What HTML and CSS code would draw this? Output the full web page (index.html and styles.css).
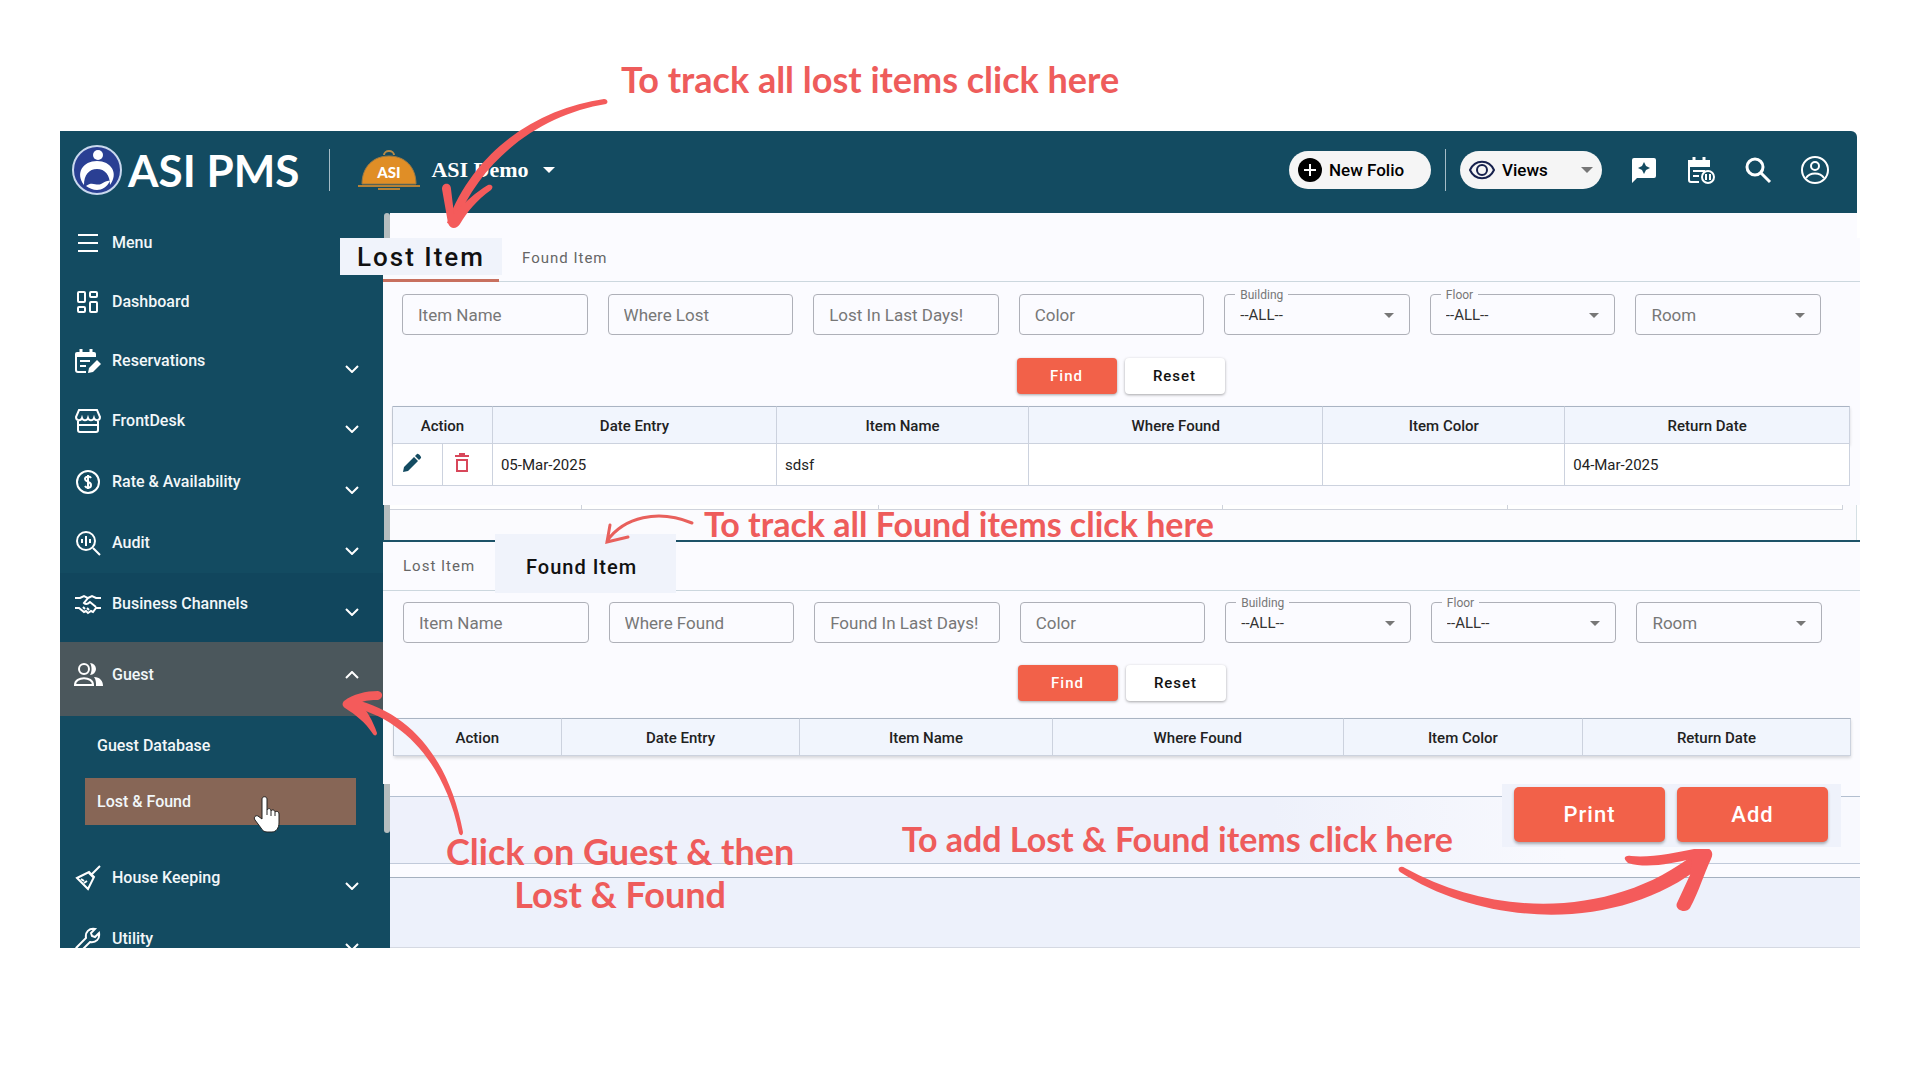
FILE: index.html
```html
<!DOCTYPE html>
<html lang="en">
  <head>
    <meta charset="utf-8">
    <title>ASI PMS - Lost &amp; Found</title>
    <link rel="stylesheet" href="styles.css">
  </head>
  <body>
    <div class="app">
      <header class="topbar">
        <a class="brand" href="#">
          <svg width="52" height="52" viewBox="0 0 52 52">
            <circle cx="26" cy="26" r="24" fill="#2a3f93" stroke="#c9d8ee" stroke-width="2"/>
            <circle cx="27" cy="11" r="5" fill="#fff"/>
            <path d="M13 41C4 29 12 17 26 17s22 12 13 24c0-10-5-16-13-16S13 31 13 41z" fill="#fff"/>
            <path d="M15 42c6-5 10 0 15-2 3-1 5-4 9-3-3 6-8 9-13 9-4 0-8-2-11-4z" fill="#fff"/>
          </svg>
          <span>ASI PMS</span>
        </a>
        <span class="divider"></span>
        <button class="property">
          <svg width="62" height="40" viewBox="0 0 62 40">
            <path d="M26 5a5 4 0 0 1 10 0" fill="none" stroke="#b98a45" stroke-width="2"/>
            <path d="M4 34C4 17 15 6 31 6s27 11 27 28z" fill="#e08e26" stroke="#9b7a46"/>
            <path d="M0 35h62v2H0z M20 38h22v2H20z" fill="#b58136"/>
            <text x="31" y="28" text-anchor="middle" class="cloche-text">ASI</text>
          </svg>
          <span>ASI Demo</span>
          <i class="caret"></i>
        </button>
        <div class="actions">
          <button class="pill">
            <svg width="24" height="24" viewBox="0 0 24 24"><circle cx="12" cy="12" r="12"/><path d="M12 6v12M6 12h12" stroke="#fff" stroke-width="2"/></svg>
            New Folio
          </button>
          <span class="divider"></span>
          <button class="pill views">
            <svg width="26" height="26" viewBox="0 0 26 26" fill="none" stroke="#17214d" stroke-width="2"><path d="M1 13C6 2 20 2 25 13 20 24 6 24 1 13z"/><circle cx="13" cy="13" r="5"/></svg>
            Views
            <i class="caret"></i>
          </button>
          <button class="icon" aria-label="What's new">
            <svg width="28" height="28" viewBox="0 0 28 28"><path d="M4 2h20a2 2 0 0 1 2 2v16a2 2 0 0 1-2 2H7l-5 5V4a2 2 0 0 1 2-2z" fill="#fff"/><path d="M14 6l2 4 4 2-4 2-2 4-2-4-4-2 4-2z" fill="#134b61"/></svg>
          </button>
          <button class="icon" aria-label="Calendar">
            <svg width="28" height="28" viewBox="0 0 28 28" fill="none" stroke="#fff" stroke-width="2"><path d="M7 1v5M17 1v5" stroke-width="3"/><path d="M1 4h22v7H1z" fill="#fff" stroke="none"/><path d="M2 9v15a2 2 0 0 0 2 2h8M6 15h12M6 20h6"/><circle cx="21" cy="21" r="6"/><path d="M19 18v6M23 18v6"/></svg>
          </button>
          <button class="icon" aria-label="Search">
            <svg width="28" height="28" viewBox="0 0 28 28" fill="none" stroke="#fff" stroke-width="3"><circle cx="11" cy="11" r="8"/><path d="M17 17l9 9"/></svg>
          </button>
          <button class="icon" aria-label="Account">
            <svg width="28" height="28" viewBox="0 0 28 28" fill="none" stroke="#fff" stroke-width="2"><circle cx="14" cy="14" r="13"/><circle cx="14" cy="10" r="4"/><path d="M5 22c4-6 14-6 18 0"/></svg>
          </button>
        </div>
      </header>

      <div class="layout">
        <nav class="sidebar">
          <ul>
            <li class="short"><a href="#"><svg class="ic" viewBox="0 0 26 26"><path d="M3 5h20M3 13h20M3 21h20"/></svg>Menu</a></li>
            <li class="short"><a href="#"><svg class="ic" viewBox="0 0 26 26"><rect x="3" y="3" width="7" height="10" rx="1"/><rect x="15" y="3" width="7" height="5" rx="1"/><rect x="3" y="18" width="7" height="5" rx="1"/><rect x="15" y="13" width="7" height="10" rx="1"/></svg>Dashboard</a></li>
            <li class="short"><a href="#"><svg class="ic" viewBox="0 0 26 26"><path d="M6 1v4M16 1v4" stroke-width="3"/><path d="M0 6a2 2 0 0 1 2-2h17a2 2 0 0 1 2 2v3H0z" class="solid"/><path d="M1 8v14a2 2 0 0 0 2 2h8M5 13h10M5 18h6"/><path d="M13 25l1-5 8-8 4 4-8 8z" class="solid"/></svg>Reservations<svg class="chev" viewBox="0 0 14 8"><path d="M1 1l6 6 6-6"/></svg></a></li>
            <li><a href="#"><svg class="ic" viewBox="0 0 26 26"><path d="M4 2h18l3 7c0 4-5 4-6 1-1 3-5 3-6 0-1 3-5 3-6 0-1 3-6 3-6-1zM3 13v9a2 2 0 0 0 2 2h16a2 2 0 0 0 2-2v-9M3 17h20"/></svg>FrontDesk<svg class="chev" viewBox="0 0 14 8"><path d="M1 1l6 6 6-6"/></svg></a></li>
            <li><a href="#"><svg class="ic" viewBox="0 0 26 26"><circle cx="13" cy="13" r="11"/><path d="M16 9c-1-2-6-2-6 1s6 2 6 6-5 3-6 1M13 6v14"/></svg>Rate &amp; Availability<svg class="chev" viewBox="0 0 14 8"><path d="M1 1l6 6 6-6"/></svg></a></li>
            <li><a href="#"><svg class="ic" viewBox="0 0 26 26"><circle cx="11" cy="11" r="9"/><path d="M18 18l7 7M7 9v4M11 6v10M15 9v4"/></svg>Audit<svg class="chev" viewBox="0 0 14 8"><path d="M1 1l6 6 6-6"/></svg></a></li>
            <li class="channels"><a href="#"><svg class="ic" viewBox="0 0 26 26"><path d="M0 7h5l4-2 4 2-4 5c2 2 4 1 6-1l6 5M26 7h-5l-4-2-4 2M0 17h4l5 4 2-1 2 2 3-2 2 1 3-4h5M8 16l2 2M12 17l2 2"/></svg>Business Channels<svg class="chev" viewBox="0 0 14 8"><path d="M1 1l6 6 6-6"/></svg></a></li>
            <li class="guest"><a href="#"><svg class="ic wide" viewBox="0 0 30 26"><circle cx="11" cy="7" r="5"/><path d="M2 23c0-9 18-9 18 0z"/><path d="M17 1a6 6 0 1 1 0 12c2-3 2-9 0-12zM21 15c6 0 9 4 9 9h-7c0-4 0-6-2-9z" class="solid"/></svg>Guest<svg class="chev" viewBox="0 0 14 8"><path d="M1 7l6-6 6 6"/></svg></a></li>
            <li class="sub"><a href="#">Guest Database</a></li>
            <li class="sub active"><a href="#">Lost &amp; Found</a></li>
            <li><a href="#"><svg class="ic" viewBox="0 0 26 26"><path d="M25 1l-8 8M2 13l12-6 5 5-6 12zM6 14l3 2M9 18l3-2M14 8l5 5" /></svg>House Keeping<svg class="chev" viewBox="0 0 14 8"><path d="M1 1l6 6 6-6"/></svg></a></li>
            <li class="last"><a href="#"><svg class="ic" viewBox="0 0 26 26"><path d="M2 25c-2-2-1-3 0-4l9-9c-1-6 3-10 9-9l-4 4 1 3 3 1 4-4c1 6-3 10-9 9l-9 9c-1 1-2 1-4 0z"/></svg>Utility<svg class="chev" viewBox="0 0 14 8"><path d="M1 1l6 6 6-6"/></svg></a></li>
          </ul>
        </nav>

        <main>
          <div class="spacer"></div>
          <section class="panel lost">
            <div class="tabs">
              <button class="tab current">Lost Item</button>
              <button class="tab">Found Item</button>
            </div>
            <form>
              <div class="fields">
                <input type="text" placeholder="Item Name" aria-label="Item Name">
                <input type="text" placeholder="Where Lost" aria-label="Where Lost">
                <input type="text" placeholder="Lost In Last Days!" aria-label="Lost In Last Days!">
                <input type="text" placeholder="Color" aria-label="Color">
                <div class="select"><label for="building1">Building</label><select id="building1"><option>--ALL--</option></select></div>
                <div class="select"><label for="floor1">Floor</label><select id="floor1"><option>--ALL--</option></select></div>
                <div class="select empty"><select aria-label="Room"><option>Room</option></select></div>
              </div>
              <div class="buttons">
                <button type="button" class="btn primary">Find</button>
                <button type="button" class="btn">Reset</button>
              </div>
            </form>
            <table>
              <colgroup><col class="w3"><col class="w3"><col class="w19"><col class="w17"><col class="w20"><col class="w16"><col></colgroup>
              <thead>
                <tr><th colspan="2">Action</th><th>Date Entry</th><th>Item Name</th><th>Where Found</th><th>Item Color</th><th>Return Date</th></tr>
              </thead>
              <tbody>
                <tr>
                  <td class="act"><button aria-label="Edit"><svg width="20" height="20" viewBox="0 0 20 20" fill="#134b61"><path d="M1 19l1-5L12 4l4 4L6 18zM13 3l2-2c1-1 5 3 4 4l-2 2z"/></svg></button></td>
                  <td class="act"><button aria-label="Delete"><svg width="20" height="20" viewBox="0 0 20 20" fill="none" stroke="#d8475a" stroke-width="2"><path d="M3 3h14M7 1h6M5 7h10v11H5z"/></svg></button></td>
                  <td>05-Mar-2025</td><td>sdsf</td><td></td><td></td><td>04-Mar-2025</td>
                </tr>
              </tbody>
            </table>
          </section>

          <div class="strip">
            <div class="ticks"><i></i><i></i><i></i><i></i><i></i></div>
          </div>

          <section class="panel found">
            <div class="tabs">
              <button class="tab">Lost Item</button>
              <button class="tab current">Found Item</button>
            </div>
            <form>
              <div class="fields">
                <input type="text" placeholder="Item Name" aria-label="Item Name">
                <input type="text" placeholder="Where Found" aria-label="Where Found">
                <input type="text" placeholder="Found In Last Days!" aria-label="Found In Last Days!">
                <input type="text" placeholder="Color" aria-label="Color">
                <div class="select"><label for="building2">Building</label><select id="building2"><option>--ALL--</option></select></div>
                <div class="select"><label for="floor2">Floor</label><select id="floor2"><option>--ALL--</option></select></div>
                <div class="select empty"><select aria-label="Room"><option>Room</option></select></div>
              </div>
              <div class="buttons">
                <button type="button" class="btn primary">Find</button>
                <button type="button" class="btn">Reset</button>
              </div>
            </form>
            <table>
              <colgroup><col class="w11"><col class="w16"><col class="w17"><col class="w20"><col class="w16"><col></colgroup>
              <thead>
                <tr><th>Action</th><th>Date Entry</th><th>Item Name</th><th>Where Found</th><th>Item Color</th><th>Return Date</th></tr>
              </thead>
            </table>
          </section>

          <footer>
            <div class="band">
              <div class="big-buttons">
                <button class="big">Print</button>
                <button class="big">Add</button>
              </div>
            </div>
            <div class="band low"></div>
          </footer>
        </main>
      </div>
    </div>

    <!-- hand pointer over Lost & Found -->
    <svg class="hand" width="28" height="38" viewBox="0 0 28 38"><path d="M9 3c0-3 5-3 5 0v11c1-2 4-2 4 1 1-2 4-1 4 1 1-1 4-1 4 2v9c0 5-3 9-7 9h-5c-3 0-5-2-6-4L2 24c-2-3 1-5 3-4l4 3z" fill="#fff" stroke="#222" stroke-width="1"/><path d="M14 14v5M18 15v5M22 16v4" stroke="#222"/></svg>

    <!-- help notes -->
    <p class="note large n1">To track all lost items click here</p>
    <p class="note n2">To track all Found items click here</p>
    <p class="note large n3">Click on Guest &amp; then<br>Lost &amp; Found</p>
    <p class="note n4">To add Lost &amp; Found items click here</p>

    <svg class="arrow a1" width="180" height="140" viewBox="0 0 180 140">
      <path d="M174 6C110 15 45 55 17 130l8 2C53 62 114 21 176 11c3-2 1-5-2-5z"/>
      <path d="M12 96c0-7 9-7 9 0l3 25c10-11 22-22 34-29 4-1 6 2 3 5-14 10-24 22-31 34-4 6-10 5-12-1z"/>
    </svg>
    <svg class="arrow a2" width="100" height="40" viewBox="0 0 100 40">
      <path d="M92 14C58 0 24 8 7 32M10 16L7 33l21-5" class="line"/>
    </svg>
    <svg class="arrow a3" width="130" height="150" viewBox="0 0 130 150">
      <path d="M8 16C65 28 105 75 119 143c1 3 4 3 4-1C110 72 72 22 12 9z"/>
      <path d="M4 11c9-7 22-10 34-10 6 1 5 8 0 9-6 0-13 0-18 3 7 8 13 18 17 30 0 3-3 3-4 1C25 32 16 25 5 18c-3-2-3-5-1-7z"/>
    </svg>
    <svg class="arrow a4" width="320" height="70" viewBox="0 0 320 70">
      <path d="M2 23c-4-4 1-7 5-4 90 50 210 50 292-16l6 13C222 83 90 79 2 23z"/>
      <path d="M230 14c-6-5-3-8 3-7 22 2 48-4 68-8 10-2 16 3 12 11-8 17-11 30-21 49-4 6-16 2-13-5l13-28 2-16c-20 4-44 10-64 4z"/>
    </svg>
  </body>
</html>
```
FILE: styles.css
```css
* {
  box-sizing: border-box;
}

body {
  margin: 0;
  padding: 131px 60px;
  position: relative;
  background: #fff;
  font-family: Roboto, sans-serif;
  font-size: 15px;
  color: #222;
}

button,
input,
select {
  font-family: inherit;
}

button {
  border: none;
  padding: 0;
  background: none;
  cursor: pointer;
}

svg {
  display: block;
}

/* top bar */
.topbar {
  display: flex;
  align-items: center;
  height: 82px;
  margin-right: 3px;
  padding: 0 28px 4px 11px;
  background: #134b61;
  border-radius: 0 6px 0 0;
}

.brand {
  display: flex;
  align-items: center;
  gap: 5px;
  color: #fff;
  font: 700 44px Lato, sans-serif;
  text-decoration: none;
}

.divider {
  width: 1px;
  height: 42px;
  background: #a5bcc6;
}

.brand + .divider {
  margin: 0 28px 0 30px;
}

.property {
  display: flex;
  align-items: center;
  color: #fff;
  font: 700 22px "Liberation Serif", serif;
}

.property span {
  margin: 0 14px 0 11px;
}

.cloche-text {
  font: 900 15px Lato, sans-serif;
  fill: #fff;
}

.caret {
  border: 6px solid transparent;
  border-top-color: currentColor;
  border-bottom: 0;
}

.actions {
  display: flex;
  align-items: center;
  margin-left: auto;
}

.actions .divider {
  margin: 0 14px;
}

.pill {
  display: flex;
  align-items: center;
  gap: 7px;
  width: 142px;
  height: 38px;
  padding: 0 9px;
  border-radius: 19px;
  background: #f5f5f5;
  color: #000;
  font-size: 17px;
  font-weight: 500;
}

.pill .caret {
  margin-left: auto;
  color: #777;
}

.icon {
  margin-left: 29px;
}

.views + .icon {
  margin-left: 28px;
}

/* sidebar */
.layout {
  display: flex;
}

.sidebar {
  width: 330px;
  flex: none;
  position: relative;
  background: #134b61;
}

/* scroll thumb */
.sidebar::after {
  content: "";
  position: absolute;
  top: 0;
  right: 0;
  width: 6px;
  height: 620px;
  border-radius: 3px;
  background: #b6bdbf;
}

.sidebar ul {
  margin: 0;
  padding: 0;
  list-style: none;
}

.sidebar a {
  display: flex;
  align-items: center;
  height: 61px;
  padding: 0 31px 0 15px;
  color: #f2f7f9;
  font-size: 16px;
  font-weight: 500;
  text-decoration: none;
}

.sidebar .short a {
  height: 59px;
}

.ic {
  width: 26px;
  height: 26px;
  margin-right: 11px;
  fill: none;
  stroke: #fff;
  stroke-width: 2;
}

.ic.wide {
  width: 30px;
  margin: 0 9px 0 -2px;
}

.ic .solid {
  fill: #fff;
  stroke: none;
}

.chev {
  width: 14px;
  height: 8px;
  margin: 16px 0 0 auto;
  fill: none;
  stroke: #fff;
  stroke-width: 2;
}

.sidebar .channels {
  padding-bottom: 8px;
  background: #11465d;
}

.guest {
  height: 74px;
  padding-top: 2px;
  background: #4b575c;
}

.guest .chev {
  margin-top: 0;
}

.sidebar .sub a {
  height: 58px;
  padding-left: 37px;
}

.sidebar .active {
  margin: 4px 34px 22px 25px;
  background: #876656;
}

.sidebar .active a {
  height: 47px;
  padding-left: 12px;
}

.last {
  height: 40px;
  overflow: hidden;
}

/* main */
main {
  flex: 1;
  min-width: 0;
}

.spacer {
  height: 25px;
  margin-right: 3px;
  background: #fbfbff;
}

.panel {
  position: relative;
  margin-left: -7px;
  background: #fbfbff;
}

.lost {
  padding-bottom: 19px;
}

.found {
  padding-bottom: 28px;
  border-top: 2px solid #1d5268;
}

.tabs {
  display: flex;
  border-bottom: 1px solid #ccd7de;
}

.lost .tabs {
  height: 44px;
}

.found .tabs {
  height: 49px;
}

.tab {
  height: 40px;
  padding: 0 20px;
  color: #666;
  font-size: 15px;
  letter-spacing: 1px;
}

.tab.current {
  background: #f0f3fb;
  color: #111;
  font-weight: 500;
}

.lost .current {
  position: relative;
  width: 162px;
  height: 37px;
  margin-left: -43px;
  font-size: 26px;
  letter-spacing: 2px;
  padding: 0;
}

.lost .current::after {
  content: "";
  position: absolute;
  top: 41px;
  left: 43px;
  right: 3px;
  height: 3px;
  background: #c8705f;
}

.found .tab {
  height: 48px;
}

.found .tab.current {
  height: 59px;
  width: 181px;
  margin-top: -8px;
  padding: 6px 8px 0 0;
  font-size: 20px;
}

.fields {
  display: grid;
  grid-template-columns: repeat(7, 1fr);
  gap: 20px;
  padding: 12px 39px 0 19px;
}

.found .fields {
  padding: 11px 38px 0 20px;
}

.fields input,
.select {
  width: 100%;
  min-width: 0;
  height: 41px;
  border: 1px solid #aeb0b8;
  border-radius: 4px;
  background: #fbfbff;
}

.fields input {
  padding: 1px 8px 0 15px;
  font-size: 17px;
}

.fields input::placeholder {
  color: #777;
}

.select {
  position: relative;
}

.select label {
  position: absolute;
  top: -7px;
  left: 10px;
  padding: 0 5px;
  background: #fbfbff;
  color: #777;
  font-size: 12px;
}

.select select {
  width: 100%;
  height: 100%;
  padding: 0 15px;
  appearance: none;
  border: none;
  background: none;
  color: #333;
  font-size: 15px;
}

.select.empty select {
  color: #777;
  font-size: 17px;
}

.select::after {
  content: "";
  position: absolute;
  right: 15px;
  top: 18px;
  border: 5px solid transparent;
  border-top-color: #777;
  border-bottom: 0;
}

.buttons {
  display: flex;
  justify-content: center;
  gap: 8px;
  margin: 23px 2px 12px 0;
}

.found .buttons {
  margin: 22px 0 17px;
}

.btn {
  width: 100px;
  height: 36px;
  border-radius: 4px;
  background: #fff;
  box-shadow: 0 1px 3px rgba(0, 0, 0, 0.35);
  color: #111;
  font-size: 15px;
  font-weight: 500;
  letter-spacing: 1px;
}

.primary {
  background: #f26149;
  color: #fff;
}

table {
  width: calc(100% - 19px);
  margin-left: 9px;
  table-layout: fixed;
  border-collapse: separate;
  border-spacing: 0;
  border-left: 1px solid #ccd2de;
}

.found table {
  margin-left: 10px;
}

th,
td {
  padding: 1px 8px 0;
  border-right: 1px solid #ccd2de;
  border-bottom: 1px solid #ccd2de;
}

th {
  height: 38px;
  border-top: 1px solid #aab4c3;
  background: #f1f5fd;
  font-weight: 500;
}

thead {
  box-shadow: 0 2px 3px rgba(0, 0, 0, 0.15);
}

td {
  height: 42px;
  background: #fff;
}

.act svg {
  margin-left: 1px;
}

.w3 { width: 3.43%; }
.w11 { width: 11.5%; }
.w16 { width: 16.4%; }
.w17 { width: 17.3%; }
.w19 { width: 19.5%; }
.w20 { width: 20%; }
.lost .w20 { width: 20.2%; }
.lost .w16 { width: 16.6%; }

.strip {
  height: 35px;
  margin-right: 3px;
  background: #fbfbfe;
  border-right: 1px solid #d5e0e4;
}

.ticks {
  display: grid;
  grid-template-columns: 192fr 297fr 344fr 285fr 335fr;
  height: 5px;
  margin-right: 13px;
  background: #fff;
  border-bottom: 1px solid #cfd3dc;
}

.ticks i {
  border-right: 1px solid #cfd3dc;
}

/* bottom bars */
footer {
  padding-top: 12px;
  background: #fbfbff;
}

.band {
  display: flex;
  justify-content: flex-end;
  height: 68px;
  padding-right: 19px;
  border-top: 1px solid #b3bfd0;
  border-bottom: 1px solid #c1cada;
  background: linear-gradient(90deg, #eef1fb 60%, #f8f9fe 80%);
}

.band.low {
  height: 71px;
  margin-top: 13px;
  border-color: #a5b0bf #d5d9e2 #d5d9e2;
  background: #edf1fb;
}

.big-buttons {
  display: flex;
  gap: 12px;
  height: 63px;
  margin-top: -13px;
  padding: 3px 13px 4px 12px;
  background: #eff2fb;
}

.big {
  width: 151px;
  height: 55px;
  border-radius: 5px;
  background: #f26149;
  box-shadow: 0 2px 3px rgba(0, 0, 0, 0.3);
  color: #fff;
  font-size: 22px;
  font-weight: 500;
  letter-spacing: 1px;
}

/* notes on top of the screens */
.hand,
.note,
.arrow {
  position: absolute;
}

.hand {
  left: 253px;
  top: 796px;
}

.note {
  margin: 0;
  color: #ee5c5b;
  font: 700 34px/43px Lato, sans-serif;
  text-align: center;
  white-space: nowrap;
}

.note.large {
  font-size: 36px;
}

.n1 { left: 621px; top: 58px; }
.n2 { left: 704px; top: 502px; }
.n3 { left: 446px; top: 830px; }
.n4 { right: 467px; top: 817px; }

.arrow {
  fill: #f45b5b;
}

.arrow .line {
  fill: none;
  stroke: #e8605c;
  stroke-width: 3;
  stroke-linecap: round;
}

.a1 { left: 430px; top: 93px; }
.a2 { left: 600px; top: 509px; }
.a3 { left: 340px; top: 690px; }
.a4 { right: 202px; top: 849px; }
```
